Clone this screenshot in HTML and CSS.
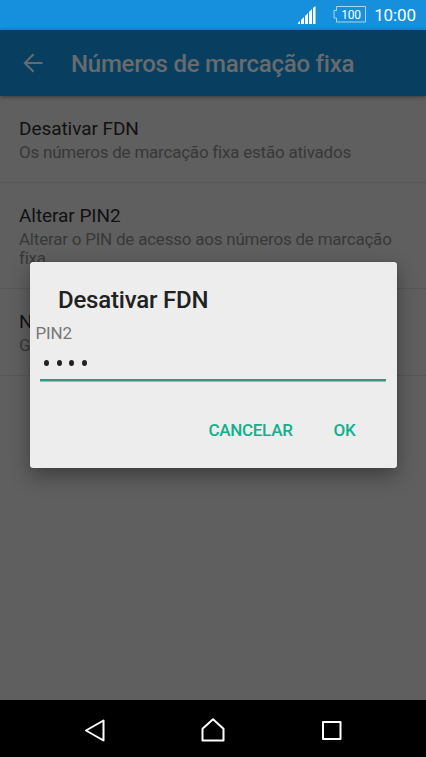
FILE: index.html
```html
<!DOCTYPE html>
<html lang="pt">
<head>
<meta charset="utf-8">
<title>Números de marcação fixa</title>
<link rel="stylesheet" href="styles.css">
</head>
<body>
<div class="phone">
  <header class="status">
    <svg class="signal" width="18" height="18" viewBox="0 0 18 18" fill="#fff"><path d="M0 18v-1l2-2v3zM3 18v-4l3-3v7zM7 18v-8l3-3v11zM11 18V6l3-3v15zM15 18V2l2.500-2v18z"/></svg>
    <div class="battery">
      <svg width="33" height="17" viewBox="0 0 33 17" fill="none" stroke="#a8d6f3" stroke-width="1"><path d="M3.500.5h29v15.500h-29v-4h-2.500v-7.500h2.500z"/></svg>
      <span class="level">100</span>
    </div>
    <span class="clock">10:00</span>
  </header>
  <div class="appbar">
    <svg class="back" width="20" height="20" viewBox="0 0 20 20" fill="none" stroke="#686b6e" stroke-width="2"><path d="M19.500 10H2M10.500 1.300L1.800 10l8.700 8.700"/></svg>
    <h1>Números de marcação fixa</h1>
  </div>
  <main class="list">
    <section class="item"><h2>Desativar FDN</h2><p>Os números de marcação fixa estão ativados</p></section>
    <section class="item tall"><h2>Alterar PIN2</h2><p>Alterar o PIN de acesso aos números de marcação fixa</p></section>
    <section class="item"><h2>N</h2><p>G</p></section>
  </main>
  <nav class="nav">
    <svg width="24" height="26" viewBox="0 0 24 26"><path d="M21.500 3.500v20L4 13.500z"/></svg>
    <svg width="26" height="26" viewBox="0 0 26 26"><path d="M1.500 23.500V11.700L12 2.300l10.500 9.400v11.800z"/></svg>
    <svg width="22" height="26" viewBox="0 0 22 26"><path d="M2 5h17.500v17H2z"/></svg>
  </nav>
  <div class="dialog" role="dialog">
    <h3>Desativar FDN</h3>
    <label>PIN2</label>
    <div class="field"><i></i><i></i><i></i><i></i></div>
    <div class="actions"><button>CANCELAR</button><button>OK</button></div>
  </div>
</div>
</body>
</html>
```
FILE: styles.css
```css
* { box-sizing: border-box; }
body { margin: 0; font-family: Roboto, sans-serif; }
h1, h2, h3, p { margin: 0; font-weight: 400; }
.phone { position: relative; width: 426px; height: 757px; overflow: hidden; display: flex; flex-direction: column; background: #5f5f5f; }
.status { height: 30px; flex: none; background: #168fdd; display: flex; align-items: flex-start; justify-content: flex-end; padding-right: 10px; color: #fff; }
.signal { margin: 6px 17px 0 0; }
.battery { position: relative; width: 33px; height: 17px; margin: 6px 8px 0 0; }
.battery svg { display: block; }
.level { position: absolute; left: 8px; top: 3px; font-size: 12px; line-height: 13px; letter-spacing: -.2px; }
.clock { font-size: 17px; line-height: 20px; margin-top: 5px; letter-spacing: -.1px; }
.appbar { height: 66px; flex: none; background: #083f60; box-shadow: 0 1px 4px rgba(0,0,0,.4); display: flex; align-items: center; padding-left: 23px; }
.back { margin-right: 28px; }
.appbar h1 { font-size: 24px; font-weight: 500; color: #686b6e; line-height: 28px; white-space: nowrap; letter-spacing: -.23px; padding-top: 2px; }
.list { flex: 1; }
.item { height: 87px; border-bottom: 1px solid #575757; padding: 21px 19px 0; }
.item.tall { height: 106px; }
.item h2 { font-size: 19px; line-height: 24px; color: #111; letter-spacing: -.06px; }
.item p { font-size: 17px; line-height: 19px; margin-top: 2px; color: #383838; letter-spacing: -.22px; }
.nav { height: 57px; flex: none; background: #000; display: flex; justify-content: space-between; padding: 17px 83px 0 82px; }
.nav path { fill: none; stroke: #fff; stroke-width: 2; stroke-linejoin: round; }
.dialog { position: absolute; left: 29.5px; top: 262px; width: 367px; height: 206px; background: #ededed; border-radius: 3px; box-shadow: 0 8px 20px rgba(0,0,0,.35), 0 0 2px rgba(0,0,0,.2); padding: 24px 11px 0 10px; display: flex; flex-direction: column; }
.dialog h3 { font-size: 24px; line-height: 28px; font-weight: 500; color: #212121; padding-left: 18.500px; letter-spacing: -.2px; }
.dialog label { font-size: 17px; line-height: 20px; color: #777; margin: 9px 0 0 -4px; letter-spacing: -.2px; }
.field { height: 38px; border-bottom: 2px solid #35967f; box-shadow: 0 1px #8fc3b6; display: flex; gap: 7.700px; padding: 17px 0 0 4.500px; }
.field i { width: 5px; height: 6px; border-radius: 50%; background: #212121; }
.actions { display: flex; justify-content: flex-end; gap: 41px; margin-top: 39px; padding-right: 30px; }
.actions button { border: 0; padding: 0; background: none; font: 500 17px/20px Roboto, sans-serif; color: #10b18c; letter-spacing: -.28px; }
```
